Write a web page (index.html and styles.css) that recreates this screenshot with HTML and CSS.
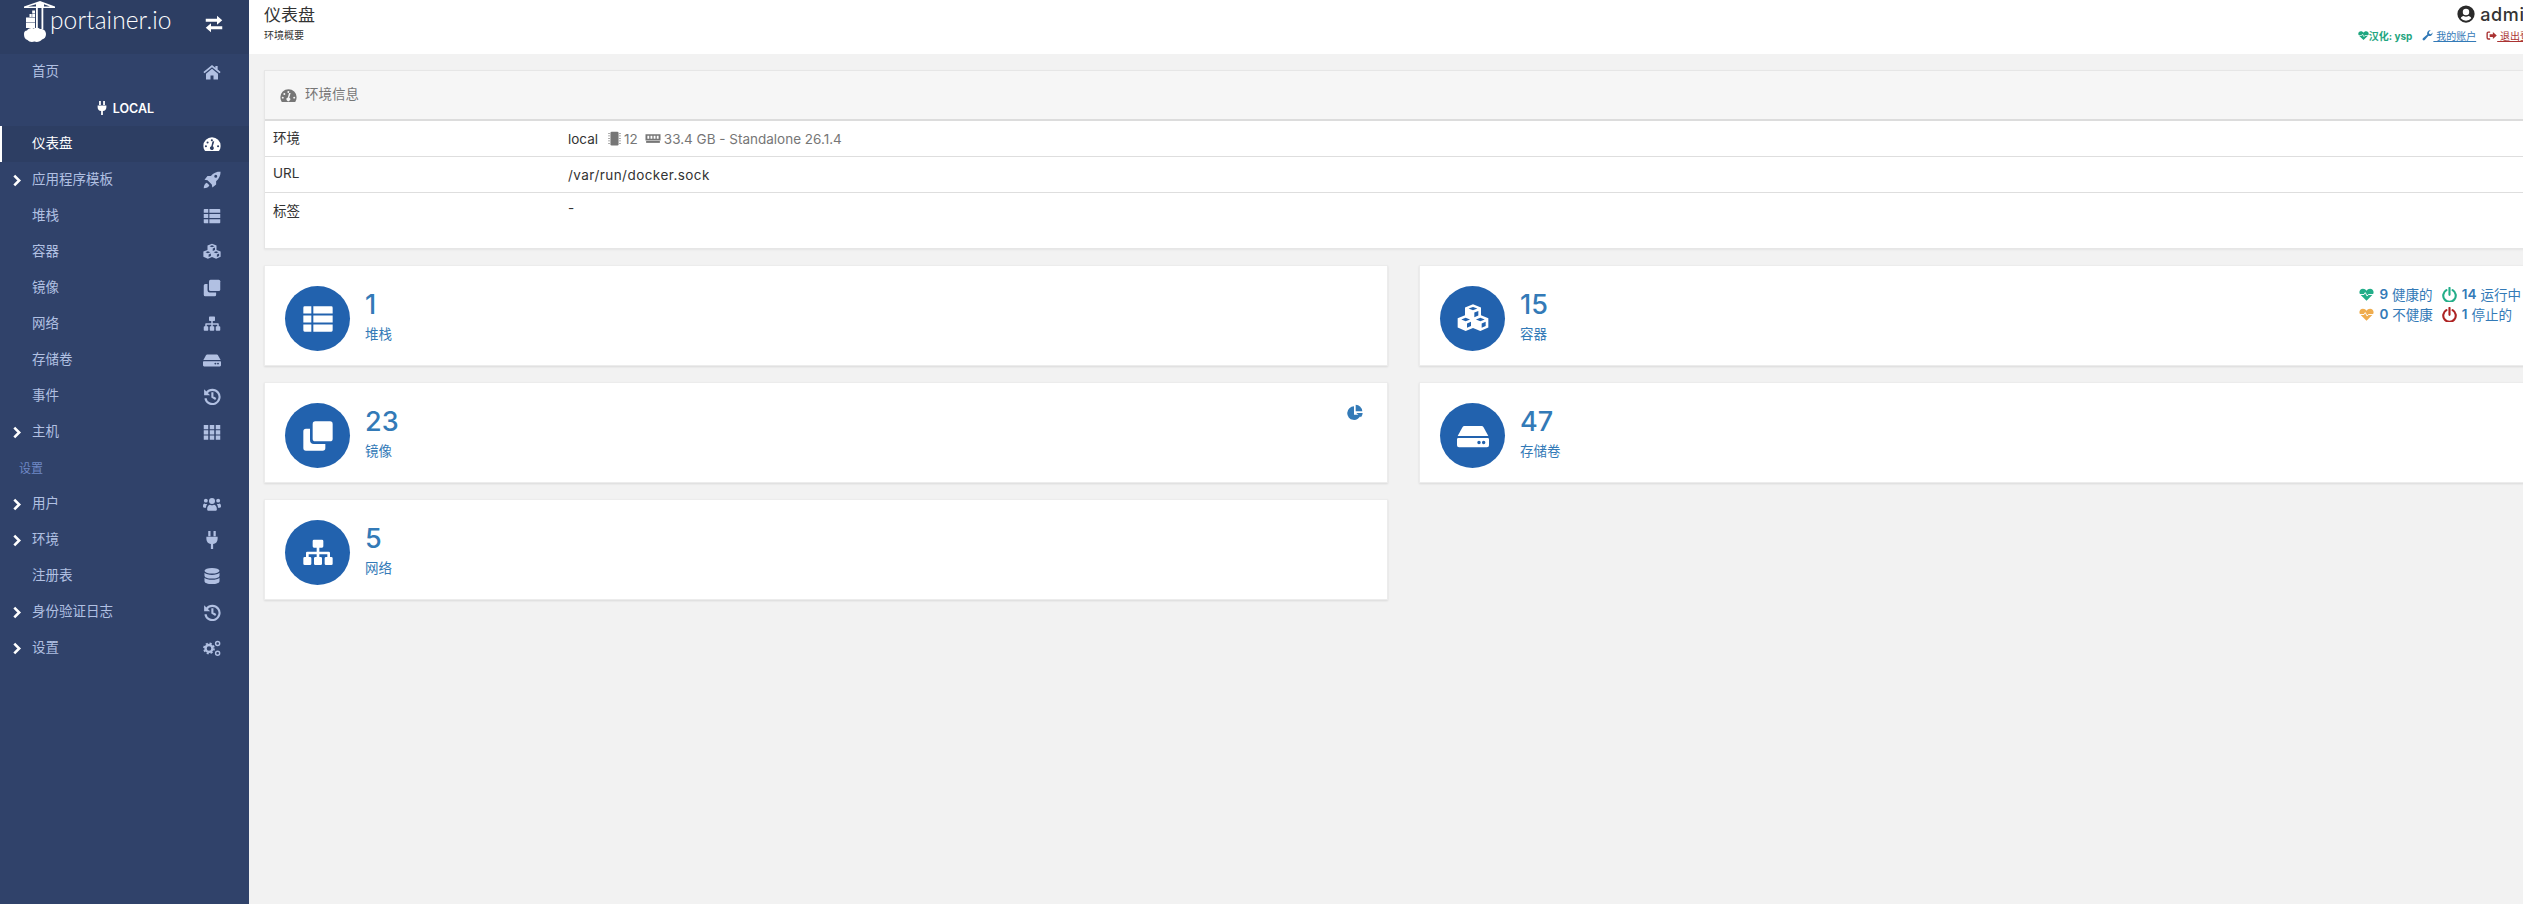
FILE: index.html
```html
<!DOCTYPE html>
<html lang="zh">
<head>
<meta charset="utf-8">
<title>Portainer</title>
<link rel="stylesheet" href="styles.css">
</head>
<body>
<svg class="defs" width="0" height="0" aria-hidden="true">
  <symbol id="i-exchange" viewBox="0 0 24 24"><path d="M1 5h15V1l7 6-7 6V9H1zM23 15H8v-4l-7 6 7 6v-4h15z"/></symbol>
  <symbol id="i-home" viewBox="0 0 24 24"><path d="M12 2.500 0.500 12l1.500 1.800L12 5.600l10 8.200 1.500-1.800-4-3.300V4h-3v2.200zM12 7.800 4 14.400V22h6v-5.500h4V22h6v-7.600z"/></symbol>
  <symbol id="i-plug" viewBox="0 0 24 24"><path d="M7 0h3v7H7zM14 0h3v7h-3zM4.500 7.500h15v3c0 3.500-2.500 6.300-6 6.800V24h-3v-6.700c-3.500-.5-6-3.300-6-6.800z"/></symbol>
  <symbol id="i-gauge" viewBox="0 0 24 24"><path fill-rule="evenodd" d="M12 3A11.500 11.500 0 0 0 .5 14.500c0 2.300.6 4.400 1.800 6.300.2.200.5.400.8.400h17.800c.3 0 .6-.2.800-.4 1.200-1.900 1.800-4 1.800-6.300A11.500 11.500 0 0 0 12 3zM13.200 7a1.400 1.400 0 1 1-2.800 0 1.400 1.400 0 0 1 2.800 0zM7.500 10a1.400 1.400 0 1 1-2.800 0 1.400 1.400 0 0 1 2.800 0zM5.300 15a1.400 1.400 0 1 1-2.800 0 1.400 1.400 0 0 1 2.800 0zM21.500 15a1.400 1.400 0 1 1-2.800 0 1.400 1.400 0 0 1 2.800 0zM15 8.500l-2 6.600a2.600 2.600 0 1 1-1.900-.2l1.700-6.900z"/></symbol>
  <symbol id="i-rocket" viewBox="0 0 24 24"><path fill-rule="evenodd" d="M23.500.5c-5.500 0-9.800 2-13 6H6L2 11.500l4 .8 5.700 5.700.8 4 5-4v-4.500c4-3.200 6-7.500 6-13.500zM17 5a2 2 0 1 1 0 4 2 2 0 0 1 0-4z"/><path d="M5 15.500c-2.500 1-4 3.500-4 7.500 4 0 6.500-1.500 7.500-4z"/></symbol>
  <symbol id="i-thlist" viewBox="0 0 24 24"><path d="M1 3.500a1 1 0 0 1 1-1h5v5.300H1zM8.500 2.500H22a1 1 0 0 1 1 1v4.300H8.500zM1 9.300h6v5.400H1zM8.500 9.300H23v5.400H8.500zM1 16.200h6v5.300H2a1 1 0 0 1-1-1zM8.500 16.200H23v4.300a1 1 0 0 1-1 1H8.500z"/></symbol>
  <symbol id="i-cubes" viewBox="0 0 24 24"><path fill-rule="evenodd" d="M12 1l6 2.300v5.900l5.500 2.200v6.900L17.500 21 12 18.700 6.500 21 .5 18.300v-6.900L6 9.200V3.300zM12 3 8.700 4.200 12 5.500l3.300-1.300zM13 7.200v3.400l3-1.300V6zM6.500 11 3.200 12.300l3.300 1.300 3.300-1.300zM17.500 11l-3.300 1.300 3.300 1.300 3.300-1.300zM7.500 15.400v3.200l3-1.300v-3.200zM18.500 15.400v3.200l3-1.300v-3.200z"/></symbol>
  <symbol id="i-clone" viewBox="0 0 24 24"><path d="M10 1h11a2 2 0 0 1 2 2v11a2 2 0 0 1-2 2H10a2 2 0 0 1-2-2V3a2 2 0 0 1 2-2z"/><path d="M6 6.500H3a2 2 0 0 0-2 2V21a2 2 0 0 0 2 2h12.500a2 2 0 0 0 2-2v-3H9a3 3 0 0 1-3-3z"/></symbol>
  <symbol id="i-sitemap" viewBox="0 0 24 24"><path d="M9 2h6a1 1 0 0 1 1 1v4a1 1 0 0 1-1 1h-2v3h7a1 1 0 0 1 1 1v3h1a1 1 0 0 1 1 1v4a1 1 0 0 1-1 1h-4a1 1 0 0 1-1-1v-4a1 1 0 0 1 1-1h1v-2h-6v2h1a1 1 0 0 1 1 1v4a1 1 0 0 1-1 1h-4a1 1 0 0 1-1-1v-4a1 1 0 0 1 1-1h1v-2H5v2h1a1 1 0 0 1 1 1v4a1 1 0 0 1-1 1H2a1 1 0 0 1-1-1v-4a1 1 0 0 1 1-1h1v-3a1 1 0 0 1 1-1h7V8H9a1 1 0 0 1-1-1V3a1 1 0 0 1 1-1z"/></symbol>
  <symbol id="i-hdd" viewBox="0 0 24 24"><path d="M5.500 4.500h13c.6 0 1 .3 1.300.8l3.700 6.700H.5l3.700-6.700c.3-.5.700-.8 1.300-.8z"/><path fill-rule="evenodd" d="M1 13.500h22a1 1 0 0 1 1 1V19a1.500 1.500 0 0 1-1.500 1.500h-21A1.500 1.500 0 0 1 0 19v-4.500a1 1 0 0 1 1-1zM16.500 15.500a1.300 1.300 0 1 0 0 2.600 1.300 1.300 0 0 0 0-2.600zM20 15.500a1.300 1.300 0 1 0 0 2.600 1.300 1.300 0 0 0 0-2.600z"/></symbol>
  <symbol id="i-history" viewBox="0 0 24 24"><path d="M5 7.500A9.500 9.500 0 1 1 3.200 15M12.500 7v6.300l4.500 2.700" fill="none" stroke="currentColor" stroke-width="2.800"/><path d="M1.500 3 9.500 11h-8z"/></symbol>
  <symbol id="i-th" viewBox="0 0 24 24"><path d="M1 2.500h6v5.700H1zM9 2.500h6v5.700H9zM17 2.500h6v5.700h-6zM1 9.500h6v5.700H1zM9 9.500h6v5.700H9zM17 9.500h6v5.700h-6zM1 16.500h6v5.700H1zM9 16.500h6v5.700H9zM17 16.500h6v5.700h-6z"/></symbol>
  <symbol id="i-users" viewBox="0 0 24 24"><circle cx="12" cy="8" r="4"/><circle cx="3.800" cy="7.500" r="2.600"/><circle cx="20.200" cy="7.500" r="2.600"/><path d="M5.500 19c0-4 2-6 4-6 .8.500 1.600.8 2.500.8s1.700-.3 2.500-.8c2 0 4 2 4 6 0 1.500-1 2-2 2H7.500c-1 0-2-.5-2-2z"/><path d="M0 15c0-2.500 1-3.800 2-3.800.7.500 1.300.7 2.300.7l1.300.5c-1 1-1.600 2.700-1.600 4.600H1.500C.5 17 0 16 0 15zM24 15c0-2.500-1-3.800-2-3.800-.7.500-1.300.7-2.300.7l-1.300.5c1 1 1.600 2.700 1.600 4.600h2.500c1 0 1.500-1 1.500-2z"/></symbol>
  <symbol id="i-db" viewBox="0 0 24 24"><ellipse cx="12" cy="5" rx="10" ry="3.800"/><path d="M2 7.700c2 2 5.500 2.800 10 2.800s8-.8 10-2.800v3.800c0 2.200-4.500 3.800-10 3.800S2 13.700 2 11.500zM2 14.200c2 2 5.500 2.800 10 2.800s8-.8 10-2.800v4.800c0 2.200-4.500 3.800-10 3.800S2 21.200 2 19z"/></symbol>
  <symbol id="i-cogs" viewBox="0 0 24 24"><circle cx="8" cy="12.500" r="4.600" fill="none" stroke="currentColor" stroke-width="3.200"/><circle cx="8" cy="12.500" r="6.700" fill="none" stroke="currentColor" stroke-width="2.200" stroke-dasharray="2.800 2.460"/><circle cx="19.500" cy="6" r="2.700" fill="none" stroke="currentColor" stroke-width="1.900"/><circle cx="19.500" cy="19" r="2.700" fill="none" stroke="currentColor" stroke-width="1.900"/></symbol>
  <symbol id="i-heart" viewBox="0 0 24 24"><path d="M12 22 2.300 12.300C-1.300 8.500 1.300 2.800 6.300 2.800c2.500 0 4.500 1.300 5.700 3 1.200-1.700 3.200-3 5.700-3 5 0 7.600 5.700 4 9.500z"/><path d="M0 12h8l2-3 3 5.500 2-2.500h9" fill="none" stroke="#fff" stroke-width="1.500"/></symbol>
  <symbol id="i-power" viewBox="0 0 24 24"><path d="M7 5a10 10 0 1 0 10 0M12 1.500v11" fill="none" stroke="currentColor" stroke-width="3.400" stroke-linecap="round"/></symbol>
  <symbol id="i-wrench" viewBox="0 0 24 24"><path fill-rule="evenodd" d="M23 6.500a6.500 6.500 0 0 1-8.800 6L6 22a2.800 2.800 0 0 1-4-4l9.500-8.200A6.500 6.500 0 0 1 19 1l-4 3.500.7 3.800 3.800.7L23 5.500z"/></symbol>
  <symbol id="i-signout" viewBox="0 0 24 24"><path d="M9 3H5a4 4 0 0 0-4 4v10a4 4 0 0 0 4 4h4v-3H5a1 1 0 0 1-1-1V7a1 1 0 0 1 1-1h4z"/><path d="M15 4.500v4.500H8v6h7v4.500l8.500-7.500z"/></symbol>
  <symbol id="i-pie" viewBox="0 0 24 24"><path d="M10.500 3.500a10.200 10.200 0 1 0 10 12.500h-10z"/><path d="M13 1a10.500 10.500 0 0 1 10 10H13z"/><path d="M14 13.500h9.500a11 11 0 0 1-2.500 6.500z"/></symbol>
  <symbol id="i-user" viewBox="0 0 24 24"><path fill-rule="evenodd" d="M12 .5a11.500 11.500 0 1 0 0 23 11.500 11.500 0 0 0 0-23zM12 5a4.300 4.300 0 1 1 0 8.600A4.300 4.300 0 0 1 12 5zM12 21a9 9 0 0 1-7-3.300c.6-1.700 2-2.900 3.700-3 1 .5 2.100.8 3.300.8s2.300-.3 3.300-.8c1.700.1 3.100 1.300 3.700 3A9 9 0 0 1 12 21z"/></symbol>
  <symbol id="i-chip" viewBox="0 0 24 24"><rect x="5.500" y="1" width="13" height="22" rx="2"/><path d="M2 3h2.500v1.500H2zM2 7h2.500v1.500H2zM2 11h2.500v1.500H2zM2 15h2.500v1.500H2zM2 19h2.500v1.500H2zM19.500 3H22v1.500h-2.500zM19.500 7H22v1.500h-2.500zM19.500 11H22v1.500h-2.500zM19.500 15H22v1.500h-2.500zM19.500 19H22v1.500h-2.500z"/></symbol>
  <symbol id="i-ram" viewBox="0 0 24 24"><path fill-rule="evenodd" d="M0 5h24v10H0zM3 7.500v5h3v-5zM8 7.500v5h3v-5zM13 7.500v5h3v-5zM18 7.500v5h3v-5z"/><path d="M1 16h22v3H1z"/></symbol>
</svg>

<div class="app">
  <aside class="sidebar">
    <div class="brand">
      <svg class="logo" viewBox="0 0 31 42" fill="#fff" aria-hidden="true">
        <path d="M0 5.500 16 0l15 5.500V7H0zM4 5.500h8V3.300zM20 3.300v2.200h6z" fill-rule="evenodd"/>
        <path d="M12 7h1.800v21H12zM17.500 7h1.800v21h-1.800z"/>
        <path d="M5.500 13h2.200v3H5.500zM8.200 13h2.800v3H8.200zM8.200 9.500h2.800v3H8.200zM2 16.500h9v4.500H2zM2 21.500h9v5.500H2z"/>
        <path d="M0 33c0-2 1-3.500 3-3.500C4 27.500 7 26.500 9.500 27.500c2-1 5-1 6.500.5 3-.5 6 1.500 6 5 0 3-1.500 5-4 5.500-1.500 2-5 3-7.500 2-2.500 1-5.500.5-7-1.500C1 38.500 0 36 0 33z"/>
      </svg>
      <span class="brand-name">portainer.io</span>
      <svg class="icon brand-toggle"><use href="#i-exchange"/></svg>
    </div>
    <nav class="nav">
      <a class="nav-row"><span class="caret"></span><span class="nav-label">首页</span><svg class="icon"><use href="#i-home"/></svg></a>
      <div class="nav-env"><svg class="icon env-icon"><use href="#i-plug"/></svg>LOCAL</div>
      <a class="nav-row active"><span class="caret"></span><span class="nav-label">仪表盘</span><svg class="icon"><use href="#i-gauge"/></svg></a>
      <a class="nav-row"><span class="caret"><svg class="chev" viewBox="0 0 8 12"><path d="M1.500 1.500 6 6l-4.500 4.500"/></svg></span><span class="nav-label">应用程序模板</span><svg class="icon"><use href="#i-rocket"/></svg></a>
      <a class="nav-row"><span class="caret"></span><span class="nav-label">堆栈</span><svg class="icon"><use href="#i-thlist"/></svg></a>
      <a class="nav-row"><span class="caret"></span><span class="nav-label">容器</span><svg class="icon"><use href="#i-cubes"/></svg></a>
      <a class="nav-row"><span class="caret"></span><span class="nav-label">镜像</span><svg class="icon"><use href="#i-clone"/></svg></a>
      <a class="nav-row"><span class="caret"></span><span class="nav-label">网络</span><svg class="icon"><use href="#i-sitemap"/></svg></a>
      <a class="nav-row"><span class="caret"></span><span class="nav-label">存储卷</span><svg class="icon"><use href="#i-hdd"/></svg></a>
      <a class="nav-row"><span class="caret"></span><span class="nav-label">事件</span><svg class="icon"><use href="#i-history"/></svg></a>
      <a class="nav-row"><span class="caret"><svg class="chev" viewBox="0 0 8 12"><path d="M1.500 1.500 6 6l-4.500 4.500"/></svg></span><span class="nav-label">主机</span><svg class="icon"><use href="#i-th"/></svg></a>
      <div class="nav-title">设置</div>
      <a class="nav-row"><span class="caret"><svg class="chev" viewBox="0 0 8 12"><path d="M1.500 1.500 6 6l-4.500 4.500"/></svg></span><span class="nav-label">用户</span><svg class="icon"><use href="#i-users"/></svg></a>
      <a class="nav-row"><span class="caret"><svg class="chev" viewBox="0 0 8 12"><path d="M1.500 1.500 6 6l-4.500 4.500"/></svg></span><span class="nav-label">环境</span><svg class="icon"><use href="#i-plug"/></svg></a>
      <a class="nav-row"><span class="caret"></span><span class="nav-label">注册表</span><svg class="icon"><use href="#i-db"/></svg></a>
      <a class="nav-row"><span class="caret"><svg class="chev" viewBox="0 0 8 12"><path d="M1.500 1.500 6 6l-4.500 4.500"/></svg></span><span class="nav-label">身份验证日志</span><svg class="icon"><use href="#i-history"/></svg></a>
      <a class="nav-row"><span class="caret"><svg class="chev" viewBox="0 0 8 12"><path d="M1.500 1.500 6 6l-4.500 4.500"/></svg></span><span class="nav-label">设置</span><svg class="icon"><use href="#i-cogs"/></svg></a>
    </nav>
  </aside>

  <main class="main">
    <header class="topbar">
      <div class="page-title">
        <h1>仪表盘</h1>
        <p>环境概要</p>
      </div>
      <div class="account">
        <div class="account-name"><svg class="user-icon"><use href="#i-user"/></svg>admin</div>
        <div class="account-links">
          <span class="credit"><svg class="mini"><use href="#i-heart"/></svg>汉化: ysp</span>
          <a class="link-blue"><svg class="mini"><use href="#i-wrench"/></svg><span class="u">&nbsp;我的账户</span></a>
          <a class="link-red"><svg class="mini"><use href="#i-signout"/></svg><span class="u">&nbsp;退出登录</span></a>
        </div>
      </div>
    </header>

    <section class="content">
      <div class="widget">
        <div class="widget-head"><svg class="head-icon"><use href="#i-gauge"/></svg><span class="head-text">环境信息</span></div>
        <div class="info-row">
          <span class="info-key">环境</span>
          <span class="info-val">local<svg class="spec-icon chip"><use href="#i-chip"/></svg><span class="muted">12</span><svg class="spec-icon ram"><use href="#i-ram"/></svg><span class="muted">33.4 GB - Standalone 26.1.4</span></span>
        </div>
        <div class="info-row">
          <span class="info-key">URL</span>
          <span class="info-val url">/var/run/docker.sock</span>
        </div>
        <div class="info-row last">
          <span class="info-key">标签</span>
          <span class="info-val">-</span>
        </div>
      </div>

      <div class="cards">
        <div class="card">
          <div class="disc"><svg class="disc-icon"><use href="#i-thlist"/></svg></div>
          <div class="stat"><div class="num">1</div><div class="cap">堆栈</div></div>
        </div>
        <div class="card">
          <div class="disc"><svg class="disc-icon"><use href="#i-cubes"/></svg></div>
          <div class="stat"><div class="num">15</div><div class="cap">容器</div></div>
          <div class="health">
            <span class="h-item"><svg class="h-icon green"><use href="#i-heart"/></svg><b>9</b> 健康的</span>
            <span class="h-item"><svg class="h-icon green"><use href="#i-power"/></svg><b>14</b> 运行中</span>
            <span class="h-item"><svg class="h-icon orange"><use href="#i-heart"/></svg><b>0</b> 不健康</span>
            <span class="h-item"><svg class="h-icon red"><use href="#i-power"/></svg><b>1</b> 停止的</span>
          </div>
        </div>
        <div class="card">
          <div class="disc"><svg class="disc-icon"><use href="#i-clone"/></svg></div>
          <div class="stat"><div class="num">23</div><div class="cap">镜像</div></div>
          <svg class="pie"><use href="#i-pie"/></svg>
        </div>
        <div class="card">
          <div class="disc"><svg class="disc-icon"><use href="#i-hdd"/></svg></div>
          <div class="stat"><div class="num">47</div><div class="cap">存储卷</div></div>
        </div>
        <div class="card">
          <div class="disc"><svg class="disc-icon"><use href="#i-sitemap"/></svg></div>
          <div class="stat"><div class="num">5</div><div class="cap">网络</div></div>
        </div>
      </div>
    </section>
  </main>
</div>
</body>
</html>
```
FILE: styles.css
```css
* { box-sizing: border-box; }
html, body {
  margin: 0;
  height: 904px;
  overflow: hidden;
  background: #f2f2f2;
}
body {
  font-family: "Inter", "Noto Sans CJK SC", sans-serif;
  font-size: 13.5px;
  color: #333;
}
.defs { position: absolute; }
.app { display: flex; width: 2523px; height: 904px; overflow: hidden; }
.icon { width: 18px; height: 18px; fill: currentColor; flex: none; }

/* sidebar */
.sidebar { flex: 0 0 249px; background: #30426a; height: 100%; }
.brand {
  display: flex;
  align-items: flex-start;
  height: 54px;
  background: #2d3e63;
  color: #fff;
  padding: 1px 26px 0 24px;
}
.logo { width: 31px; height: 42px; flex: none; margin-right: -5px; }
.brand-name {
  font-family: "Lato", sans-serif;
  font-weight: 300;
  font-size: 24.5px;
  line-height: 30px;
  letter-spacing: 0.1px;
  flex: 1;
  margin-top: 4px;
}
.brand-toggle { margin-top: 14px; }
.nav-row {
  display: flex;
  align-items: center;
  height: 36px;
  padding-right: 28px;
  color: #b1c0e2;
  border-left: 2px solid transparent;
}
.nav-row.active { background: #2d3e63; color: #fff; border-left-color: #fff; }
.caret { width: 30px; padding-left: 10px; display: flex; flex: none; }
.chev { width: 10px; height: 13px; fill: none; stroke: #fff; stroke-width: 2.4; }
.nav-label { flex: 1; padding-bottom: 4px; }
.nav-env {
  display: flex;
  align-items: center;
  justify-content: center;
  height: 36px;
  color: #fff;
  font-size: 12.500px;
  font-weight: 600;
}
.env-icon { width: 14px; height: 14px; margin-right: 4px; }
.nav-title {
  height: 36px;
  display: flex;
  align-items: center;
  padding-left: 19px;
  padding-bottom: 2px;
  font-size: 12px;
  color: #6f88c6;
}

/* main */
.main { flex: 0 0 2310px; height: 100%; }
.topbar {
  display: flex;
  justify-content: space-between;
  height: 54px;
  background: #fff;
  padding: 0 19px 0 15px;
}
.page-title h1 { margin: 3px 0 0; font-size: 17px; font-weight: 400; line-height: 24px; }
.page-title p { margin: 1px 0 0; font-size: 10px; line-height: 14px; }
.account { display: flex; flex-direction: column; align-items: flex-end; }
.account-name {
  display: flex;
  align-items: center;
  height: 28px;
  margin-right: 4px;
  font-size: 18px;
  font-weight: 500;
  letter-spacing: 0.6px;
}
.user-icon { width: 18px; height: 18px; margin-right: 5px; fill: #2b2b2b; }
.account-links { display: flex; align-items: center; gap: 10px; font-size: 10px; height: 14px; }
.mini { width: 11px; height: 11px; fill: currentColor; vertical-align: -1px; }
.credit { color: #1fa67f; font-weight: 700; }
.link-blue { color: #337ab7; }
.link-red { color: #a33; }
.u { text-decoration: underline; }

.content { padding: 16px 0 0 15px; }
.widget {
  width: 2280px;
  height: 179px;
  background: #fff;
  border: 1px solid #e6e6e6;
  box-shadow: 0 1px 2px rgba(0, 0, 0, .06);
}
.widget-head {
  display: flex;
  align-items: center;
  height: 50px;
  padding-left: 15px;
  background: #f6f6f6;
  border-bottom: 2px solid #dcdcdc;
  color: #767676;
  font-size: 13.500px;
}
.head-text { padding-bottom: 5px; }
.head-icon { width: 17px; height: 17px; margin-right: 8px; fill: #767676; }
.info-row {
  display: grid;
  grid-template-columns: 295px 1fr;
  height: 36px;
  align-items: center;
  padding-left: 8px;
  border-bottom: 1px solid #dedede;
}
.info-row.last { height: 56px; border-bottom: 0; align-items: start; padding-top: 7px; }
.info-key { padding-bottom: 4px; }
.info-val { display: flex; align-items: center; }
.url { letter-spacing: 0.45px; }
.muted { color: #767676; }
.spec-icon { height: 15px; fill: #767676; flex: none; }
.chip { width: 15px; margin: 0 2px 0 9px; }
.ram { width: 18px; margin: 0 2px 0 6px; }

/* cards */
.cards {
  display: grid;
  grid-template-columns: 1124px 1124px;
  grid-auto-rows: 101px;
  gap: 16px 31px;
  margin-top: 16px;
}
.card {
  display: flex;
  align-items: flex-start;
  background: #fff;
  border: 1px solid #ececec;
  box-shadow: 0 1px 2px rgba(0, 0, 0, .1);
  padding: 20px 0 0 20px;
}
.disc {
  width: 65px;
  height: 65px;
  border-radius: 50%;
  background: #2262ae;
  display: flex;
  align-items: center;
  justify-content: center;
  flex: none;
}
.disc-icon { width: 32px; height: 32px; fill: #fff; }
.stat { margin-left: 15px; color: #337ab7; }
.num { font-size: 27px; line-height: 36px; font-weight: 500; margin-top: 1px; }
.cap { font-size: 13.500px; line-height: 20px; margin-top: 1px; }
.health {
  margin-left: auto;
  margin-right: 21px;
  margin-top: -2px;
  display: grid;
  grid-template-columns: auto auto;
  column-gap: 9px;
  color: #337ab7;
}
.h-item { display: flex; align-items: center; height: 20px; white-space: nowrap; gap: 4px; }
.h-item b { font-weight: 600; }
.h-icon { width: 15px; height: 15px; fill: currentColor; margin-right: 1px; }
.green { color: #23ae89; }
.orange { color: #f0ad4e; }
.red { color: #ae2323; }
.pie { width: 16px; height: 16px; fill: #337ab7; margin-left: auto; margin-right: 24px; margin-top: 1px; }
```
